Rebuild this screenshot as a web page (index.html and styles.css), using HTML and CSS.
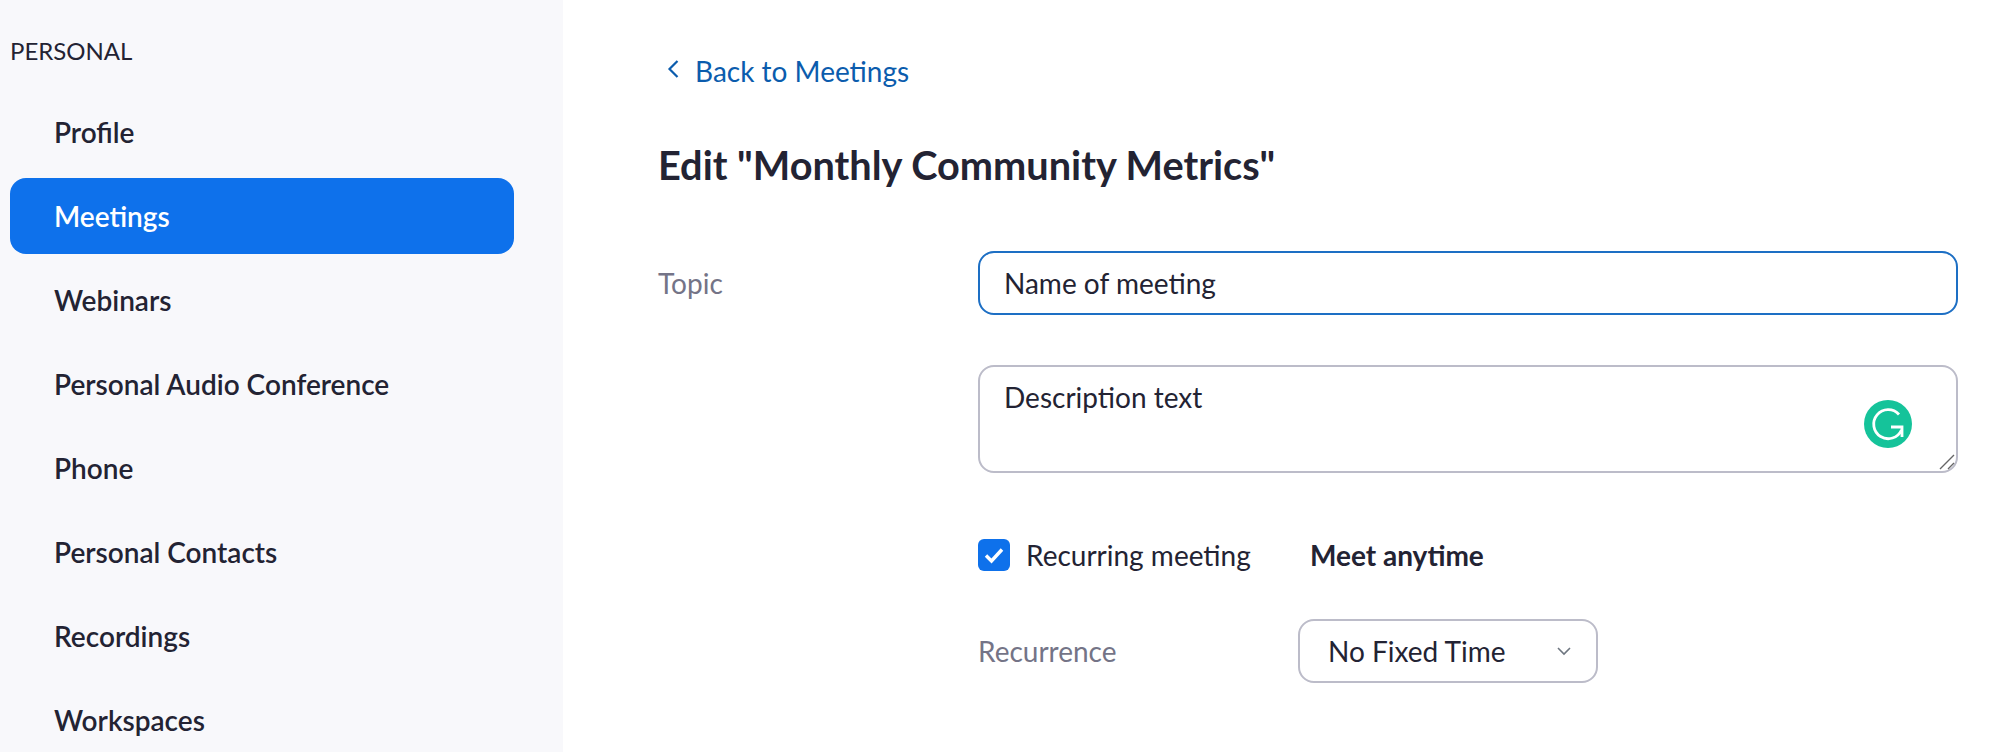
FILE: index.html
```html
<!DOCTYPE html>
<html>
<head>
    <title>Edit Meeting</title>
    <link rel="stylesheet" href="styles.css">
</head>
<body>
    <div class="page">
        <!-- Side navigation -->
        <nav class="sidebar">
            <div class="nav-title">PERSONAL</div>
            <a class="nav-item">Profile</a>
            <a class="nav-item active">Meetings</a>
            <a class="nav-item">Webinars</a>
            <a class="nav-item">Personal Audio Conference</a>
            <a class="nav-item">Phone</a>
            <a class="nav-item">Personal Contacts</a>
            <a class="nav-item">Recordings</a>
            <a class="nav-item">Workspaces</a>
        </nav>

        <!-- Edit form -->
        <main class="content">
            <a class="back-link">
                <svg class="back-icon" width="14" height="20" viewBox="0 0 14 20"><path d="M11.5 2 L3.5 10 L11.5 18" fill="none" stroke="#0b5cad" stroke-width="2.2"/></svg>
                Back to Meetings
            </a>
            <h1 class="page-title">Edit "Monthly Community Metrics"</h1>

            <div class="form-row topic-row">
                <div class="form-label">Topic</div>
                <div class="form-input focused">Name of meeting</div>
            </div>

            <div class="form-row description-row">
                <div class="form-label"></div>
                <div class="form-input textarea">
                    Description text
                    <svg class="grammarly" width="48" height="48" viewBox="0 0 48 48">
                        <circle cx="24" cy="24" r="24" fill="#15c39a"/>
                        <path d="M35 14.5 A14.5 14.5 0 1 0 37.5 30" fill="none" stroke="#fff" stroke-width="2.8"/>
                        <path d="M27 27 H38 V37" fill="none" stroke="#fff" stroke-width="2.8"/>
                    </svg>
                    <svg class="resize-grip" width="16" height="16" viewBox="0 0 16 16">
                        <path d="M1 15 L15 1 M9 15 L15 9" stroke="#666" stroke-width="1.4"/>
                    </svg>
                </div>
            </div>

            <div class="form-row recurring-row">
                <div class="form-label"></div>
                <div class="recurring">
                    <span class="checkbox">
                        <svg width="22" height="20" viewBox="0 0 22 20"><path d="M3 10.5 L8.5 16 L19 4.5" fill="none" stroke="#fff" stroke-width="3.4"/></svg>
                    </span>
                    <span class="check-label">Recurring meeting</span>
                    <span class="recurring-note">Meet anytime</span>
                </div>
            </div>

            <div class="form-row recurrence-row">
                <div class="form-label"></div>
                <div class="recurrence">
                    <span class="recurrence-label">Recurrence</span>
                    <div class="select-box">
                        No Fixed Time
                        <svg width="16" height="10" viewBox="0 0 16 10"><path d="M2 2 L8 8 L14 2" fill="none" stroke="#6e7680" stroke-width="1.6"/></svg>
                    </div>
                </div>
            </div>
        </main>
    </div>
</body>
</html>
```

FILE: styles.css
```css
/* Page */
html, body {
    height: 100%;
}

body {
    margin: 0;
    overflow: hidden;
    background-color: #ffffff;
    color: #232333;
    font-family: 'Lato', 'Open Sans', Arial, sans-serif;
}

.page {
    display: flex;
    height: 100%;
}

/* Side navigation */
.sidebar {
    width: 563px;
    flex-shrink: 0;
    box-sizing: border-box;
    padding: 32px 49px 0 10px;
    background-color: #f8f8fb;
}

.nav-title {
    height: 38px;
    line-height: 38px;
    margin-bottom: 24px;
    font-size: 24px;
}

.nav-item {
    display: block;
    height: 76px;
    line-height: 76px;
    margin-bottom: 8px;
    padding-left: 44px;
    border-radius: 16px;
    font-size: 28px;
    font-weight: 600;
}

.nav-item.active {
    background-color: #0e71eb;
    color: #ffffff;
}

/* Main column */
.content {
    flex: 1;
    padding: 51px 34px 0 95px;
}

.back-link {
    display: flex;
    align-items: center;
    gap: 15px;
    height: 40px;
    padding-left: 8px;
    color: #0b5cad;
    font-size: 28px;
}

.back-icon {
    margin-top: -4px;
}

.page-title {
    margin: 44px 0 0 0;
    height: 60px;
    line-height: 60px;
    font-size: 39.7px;
    font-weight: 700;
}

/* Form rows */
.form-row {
    display: flex;
}

.form-label {
    width: 320px;
    flex-shrink: 0;
    color: #747487;
    font-size: 28px;
}

.topic-row {
    align-items: center;
    margin-top: 56px;
}

.description-row {
    margin-top: 50px;
}

.recurring-row {
    margin-top: 65px;
}

.recurrence-row {
    margin-top: 47px;
}

.form-input {
    flex: 1;
    box-sizing: border-box;
    height: 64px;
    line-height: 60px;
    padding: 0 24px;
    border: 2px solid #bcbcc9;
    border-radius: 16px;
    font-size: 28px;
}

.form-input.focused {
    border-color: #1d6fc4;
}

.form-input.textarea {
    position: relative;
    height: 108px;
    line-height: 28px;
    padding-top: 16px;
}

.grammarly {
    position: absolute;
    right: 44px;
    top: 33px;
}

.resize-grip {
    position: absolute;
    right: 1px;
    bottom: 1px;
}

/* Recurring meeting */
.recurring {
    display: flex;
    align-items: center;
    font-size: 28px;
}

.checkbox {
    display: flex;
    align-items: center;
    justify-content: center;
    width: 32px;
    height: 32px;
    margin-right: 16px;
    border-radius: 6px;
    background-color: #0e71eb;
}

.check-label {
    width: 284px;
}

.recurring-note {
    font-weight: 700;
}

.recurrence {
    display: flex;
    align-items: center;
}

.recurrence-label {
    width: 320px;
    color: #747487;
    font-size: 28px;
}

.select-box {
    display: flex;
    align-items: center;
    justify-content: space-between;
    box-sizing: border-box;
    width: 300px;
    height: 64px;
    padding: 0 24px 0 28px;
    border: 2px solid #bcbcc9;
    border-radius: 16px;
    font-size: 28px;
}
```
